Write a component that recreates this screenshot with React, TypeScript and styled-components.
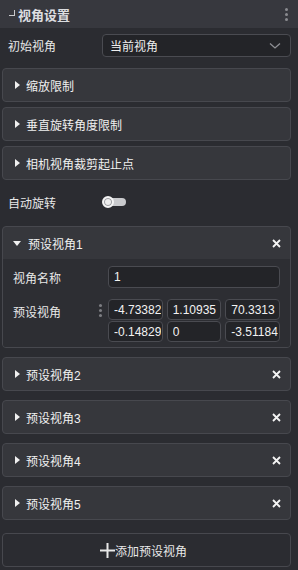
import { useState } from "react";
import styled, { createGlobalStyle } from "styled-components";

const GlobalStyle = createGlobalStyle`
  html, body {
    margin: 0;
    padding: 0;
    background: #2b2c31;
  }
  body {
    font-family: "Liberation Sans", "Noto Sans CJK SC", sans-serif;
    font-size: 12px;
    color: #e8e8e8;
  }
`;

const Panel = styled.div`
  width: 298px;
  height: 570px;
  background: #2b2c31;
  display: flex;
  flex-direction: column;
  overflow: hidden;
`;

const TitleBar = styled.div`
  height: 28px;
  flex: none;
  display: flex;
  align-items: center;
  padding: 0 10px 0 9px;
  background: #37383e;
  font-size: 13px;
  font-weight: 700;
  color: #dcdde0;
`;

const CornerMark = styled.span`
  width: 5px;
  height: 5px;
  border-right: 1.5px solid #c9cacd;
  border-bottom: 1.5px solid #c9cacd;
  margin: 0 3px 2px 0;
`;

const TitleText = styled.span`
  flex: 1;
`;

const Kebab = styled.div<{ $color?: string }>`
  display: flex;
  flex-direction: column;
  gap: 2px;
  span {
    width: 3px;
    height: 3px;
    border-radius: 50%;
    background: ${(p) => p.$color ?? "#8a8b90"};
  }
`;

const Content = styled.div`
  display: flex;
  flex-direction: column;
  padding: 6px 7px 0 2px;
`;

const FieldRow = styled.div<{ $h?: number; $pl?: number; $col?: number }>`
  display: grid;
  grid-template-columns: ${(p) => p.$col ?? 94}px minmax(0, 1fr);
  align-items: center;
  height: ${(p) => p.$h ?? 23}px;
  padding-left: ${(p) => p.$pl ?? 6}px;
`;

const Label = styled.span`
  font-size: 12px;
  color: #e8e8e8;
`;

const Select = styled.div`
  height: 23px;
  box-sizing: border-box;
  border: 1px solid #4a4b51;
  border-radius: 4px;
  background: #232428;
  display: flex;
  align-items: center;
  justify-content: space-between;
  padding: 0 9px 0 7px;
  font-size: 12px;
  color: #eeeeee;
`;

const Collapse = styled.div<{ $mt: number }>`
  margin-top: ${(p) => p.$mt}px;
  border: 1px solid #47484e;
  border-radius: 4px;
  background: #36373c;
  overflow: hidden;
`;

const CollapseHead = styled.div`
  height: 32px;
  display: flex;
  align-items: center;
  padding: 0 9px 0 10px;
  font-size: 12px;
  color: #f0f0f0;
`;

const Arrow = styled.span<{ $open?: boolean }>`
  width: 0;
  height: 0;
  margin-right: 7px;
  ${(p) =>
    p.$open
      ? `border-left: 4px solid transparent; border-right: 4px solid transparent; border-top: 5px solid #f0f0f0;`
      : `border-top: 4px solid transparent; border-bottom: 4px solid transparent; border-left: 5px solid #f0f0f0; margin-left: 2px; margin-right: 6px;`}
`;

const HeadText = styled.span`
  flex: 1;
`;

const CollapseBody = styled.div`
  background: #2d2e33;
  padding: 7px 10px 5px 10px;
  display: flex;
  flex-direction: column;
`;

const Input = styled.div<{ $h?: number }>`
  height: ${(p) => p.$h ?? 21}px;
  min-width: 0;
  box-sizing: border-box;
  border: 1px solid #4a4b51;
  border-radius: 4px;
  background: #232428;
  display: flex;
  align-items: center;
  padding: 0 1px 0 5px;
  font-size: 12px;
  color: #f2f2f2;
`;

const InputText = styled.span`
  flex: 1;
  min-width: 0;
  overflow: hidden;
  white-space: nowrap;
`;

const VectorRow = styled.div`
  display: grid;
  grid-template-columns: 95px minmax(0, 1fr);
  margin-top: 11px;
`;

const VectorLabel = styled.div`
  display: flex;
  justify-content: space-between;
  padding: 4px 6px 0 0;
`;

const VectorGrid = styled.div`
  display: grid;
  grid-template-columns: repeat(3, minmax(0, 1fr));
  gap: 1px 4px;
`;

const ToggleTrack = styled.div`
  width: 23px;
  height: 8px;
  border-radius: 4px;
  background: #c9cacd;
  position: relative;
  margin-left: 1px;
`;

const ToggleKnob = styled.div`
  position: absolute;
  left: -1px;
  top: -2px;
  width: 8px;
  height: 8px;
  border-radius: 50%;
  background: #eeeeee;
  border: 2px solid #f4f4f4;
  box-shadow: inset 0 0 0 1px #9a9b9f;
`;

const AddButton = styled.div`
  margin-top: 13px;
  height: 34px;
  box-sizing: border-box;
  border: 1px solid #47484e;
  border-radius: 4px;
  display: flex;
  align-items: center;
  justify-content: center;
  font-size: 12px;
  color: #e8e8e8;
  padding-right: 6px;
`;

const Chevron = () => (
  <svg width="12" height="8" viewBox="0 0 12 8">
    <path d="M1 1.5 L6 6 L11 1.5" fill="none" stroke="#8e8f94" strokeWidth="1.3" />
  </svg>
);

const Close = () => (
  <svg width="9" height="9" viewBox="0 0 9 9">
    <path d="M1 1 L8 8 M8 1 L1 8" stroke="#f4f4f4" strokeWidth="1.8" />
  </svg>
);

const Plus = () => (
  <svg width="15" height="15" viewBox="0 0 15 15">
    <path d="M7.5 0 V15 M0 7.5 H15" stroke="#e8e8e8" strokeWidth="2" />
  </svg>
);

const vectors = ["-4.73382", "1.10935", "70.3313", "-0.14829", "0", "-3.51184"];

const App = () => {
  const [open] = useState(true);
  return (
    <Panel>
      <GlobalStyle />
      <TitleBar>
        <CornerMark />
        <TitleText>视角设置</TitleText>
        <Kebab>
          <span />
          <span />
          <span />
        </Kebab>
      </TitleBar>
      <Content>
        <FieldRow>
          <Label>初始视角</Label>
          <Select>
            当前视角
            <Chevron />
          </Select>
        </FieldRow>
        <Collapse $mt={11}>
          <CollapseHead>
            <Arrow />
            <HeadText>缩放限制</HeadText>
          </CollapseHead>
        </Collapse>
        <Collapse $mt={5}>
          <CollapseHead>
            <Arrow />
            <HeadText>垂直旋转角度限制</HeadText>
          </CollapseHead>
        </Collapse>
        <Collapse $mt={5}>
          <CollapseHead>
            <Arrow />
            <HeadText>相机视角裁剪起止点</HeadText>
          </CollapseHead>
        </Collapse>
        <FieldRow $h={22} style={{ marginTop: 11 }}>
          <Label>自动旋转</Label>
          <ToggleTrack>
            <ToggleKnob />
          </ToggleTrack>
        </FieldRow>
        <Collapse $mt={13}>
          <CollapseHead>
            <Arrow $open={open} />
            <HeadText>预设视角1</HeadText>
            <Close />
          </CollapseHead>
          <CollapseBody>
            <FieldRow $h={22} $pl={0} $col={95}>
              <Label>视角名称</Label>
              <Input $h={22}>
                <InputText>1</InputText>
              </Input>
            </FieldRow>
            <VectorRow>
              <VectorLabel>
                <Label>预设视角</Label>
                <Kebab $color="#7d7e83" style={{ marginTop: 1 }}>
                  <span />
                  <span />
                  <span />
                </Kebab>
              </VectorLabel>
              <VectorGrid>
                {vectors.map((v, i) => (
                  <Input key={i}>
                    <InputText>{v}</InputText>
                  </Input>
                ))}
              </VectorGrid>
            </VectorRow>
          </CollapseBody>
        </Collapse>
        {[2, 3, 4, 5].map((n) => (
          <Collapse $mt={9} key={n}>
            <CollapseHead>
              <Arrow />
              <HeadText>预设视角{n}</HeadText>
              <Close />
            </CollapseHead>
          </Collapse>
        ))}
        <AddButton>
          <Plus />
          添加预设视角
        </AddButton>
      </Content>
    </Panel>
  );
};

export default App;
